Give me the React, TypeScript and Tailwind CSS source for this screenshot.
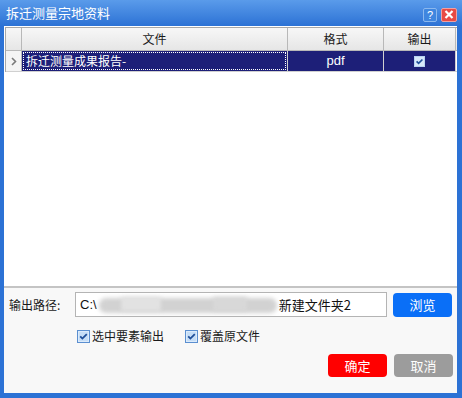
import React from 'react'

const font = { fontFamily: '"Noto Sans CJK SC", "Noto Sans", sans-serif' }

function Check({ className = '' }: { className?: string }) {
  return (
    <svg width="13" height="13" viewBox="0 0 13 13" className={className}>
      <rect x="0.5" y="0.5" width="12" height="12" fill="#dcebfb" stroke="#5b8fd0" />
      <rect x="2" y="2" width="9" height="9" fill="#c6def7" />
      <path d="M3.2 6.4 L5.4 8.6 L9.8 4.2" fill="none" stroke="#1f4f9a" strokeWidth="1.8" />
    </svg>
  )
}

export default function App() {
  return (
    <div
      className="w-[462px] h-[398px] flex flex-col bg-[#2c72d5] overflow-hidden"
      style={font}
    >
      {/* Title bar */}
      <div className="h-[26px] flex items-center justify-between pl-[6px] pr-[5px] bg-gradient-to-b from-[#5a9bea] to-[#2c72d5]">
        <span className="text-[13px] leading-none text-white pb-[1px]">拆迁测量宗地资料</span>
        <div className="flex items-center gap-[4px] pt-[3px]">
          <div className="w-[14px] h-[14px] rounded-[2px] border border-[#8bb8ee] bg-[#3f86df] text-white text-[11px] leading-[12px] text-center font-['Liberation_Sans']">
            ?
          </div>
          <div className="w-[16px] h-[14px] rounded-[2px] border border-[#f0a0a0] bg-[#e84a45] flex items-center justify-center">
            <svg width="10" height="9" viewBox="0 0 10 9">
              <path d="M1.5 1 L8.5 8 M8.5 1 L1.5 8" stroke="white" strokeWidth="2.2" />
            </svg>
          </div>
        </div>
      </div>

      {/* Client area */}
      <div className="flex-1 ml-[4px] mr-[5px] mb-[5px] flex flex-col bg-[#f8f8f8]">
        {/* Grid */}
        <div className="h-[262px] bg-white pl-[1px] pt-[1px] border-b-2 border-[#c4c4c4]">
          <div className="border-t border-l border-[#a8a8a8]">
            <div className="flex h-[23px] text-[12px] text-[#1a1a1a] bg-gradient-to-b from-[#f7f7f7] to-[#e6e6e6] border-b border-[#b8b8b8]">
              <div className="w-[16px] border-r border-[#b8b8b8]" />
              <div className="w-[266px] flex items-center justify-center border-r border-[#b8b8b8]">文件</div>
              <div className="w-[96px] flex items-center justify-center border-r border-[#b8b8b8]">格式</div>
              <div className="w-[72px] flex items-center justify-center border-r border-[#b8b8b8]">输出</div>
            </div>
            <div className="flex h-[21px] text-[12px] text-white border-b border-[#d0d0d0]">
              <div className="w-[16px] bg-[#f4f4f4] border-r border-[#b8b8b8] flex items-center justify-center">
                <svg width="6" height="9" viewBox="0 0 6 9">
                  <path d="M1 1 L4.5 4.5 L1 8" fill="none" stroke="#7a7a7a" strokeWidth="1.6" />
                </svg>
              </div>
              <div className="w-[266px] bg-[#1d1f78] border-r border-[#d0d0d0] p-[1px]">
                <div className="h-full border border-dotted border-white flex items-center pl-[2px]">
                  拆迁测量成果报告-
                </div>
              </div>
              <div className="w-[96px] bg-[#1d1f78] border-r border-[#d0d0d0] flex items-center justify-center text-[13px] font-['Liberation_Sans']">
                pdf
              </div>
              <div className="w-[72px] bg-[#1d1f78] border-r border-[#d0d0d0] flex items-center justify-center">
                <svg width="11" height="11" viewBox="0 0 11 11">
                  <rect x="0.5" y="0.5" width="10" height="10" fill="#d7e8fa" stroke="#b8d3f2" />
                  <path d="M2.6 5.3 L4.6 7.3 L8.4 3.5" fill="none" stroke="#1f4f9a" strokeWidth="1.7" />
                </svg>
              </div>
            </div>
          </div>
        </div>

        {/* Bottom panel */}
        <div className="flex-1 flex flex-col pt-[4px]">
          <div className="flex items-center h-[25px]">
            <span className="w-[71px] pl-[5px] text-[12px] text-[#1a1a1a]">输出路径:</span>
            <div className="w-[312px] h-[25px] bg-white border border-[#b4b4b4] flex items-center pl-[4px] text-[13px] text-[#111] overflow-hidden">
              <span className="font-['Liberation_Sans']">C:\</span>
              <div className="relative w-[182px] h-[20px]">
                <div className="absolute left-[2px] top-[3px] w-[178px] h-[15px] rounded-[7px] bg-[#d2d2d2] blur-[2px]" />
                <div className="absolute left-[24px] top-[2px] w-[40px] h-[14px] bg-[#e2e2e2] blur-[2px]" />
                <div className="absolute left-[116px] top-[2px] w-[34px] h-[14px] bg-[#d8d8d8] blur-[2px]" />
              </div>
              <span>新建文件夹2</span>
            </div>
            <button className="ml-[6px] w-[59px] h-[24px] rounded-[4px] bg-[#0a6ff7] text-white text-[13px]">
              浏览
            </button>
          </div>

          <div className="flex items-center h-[16px] mt-[11px] pl-[73px] text-[12px] text-[#1a1a1a]">
            <Check />
            <span className="ml-[2px]">选中要素输出</span>
            <Check className="ml-[21px]" />
            <span className="ml-[2px]">覆盖原文件</span>
          </div>

          <div className="flex justify-end gap-[7px] mt-[10px] pr-[4px]">
            <button className="w-[59px] h-[23px] rounded-[4px] bg-[#ff0000] text-white text-[13px]">确定</button>
            <button className="w-[59px] h-[23px] rounded-[4px] bg-[#9c9c9c] text-white text-[13px]">取消</button>
          </div>
        </div>
      </div>
    </div>
  )
}
